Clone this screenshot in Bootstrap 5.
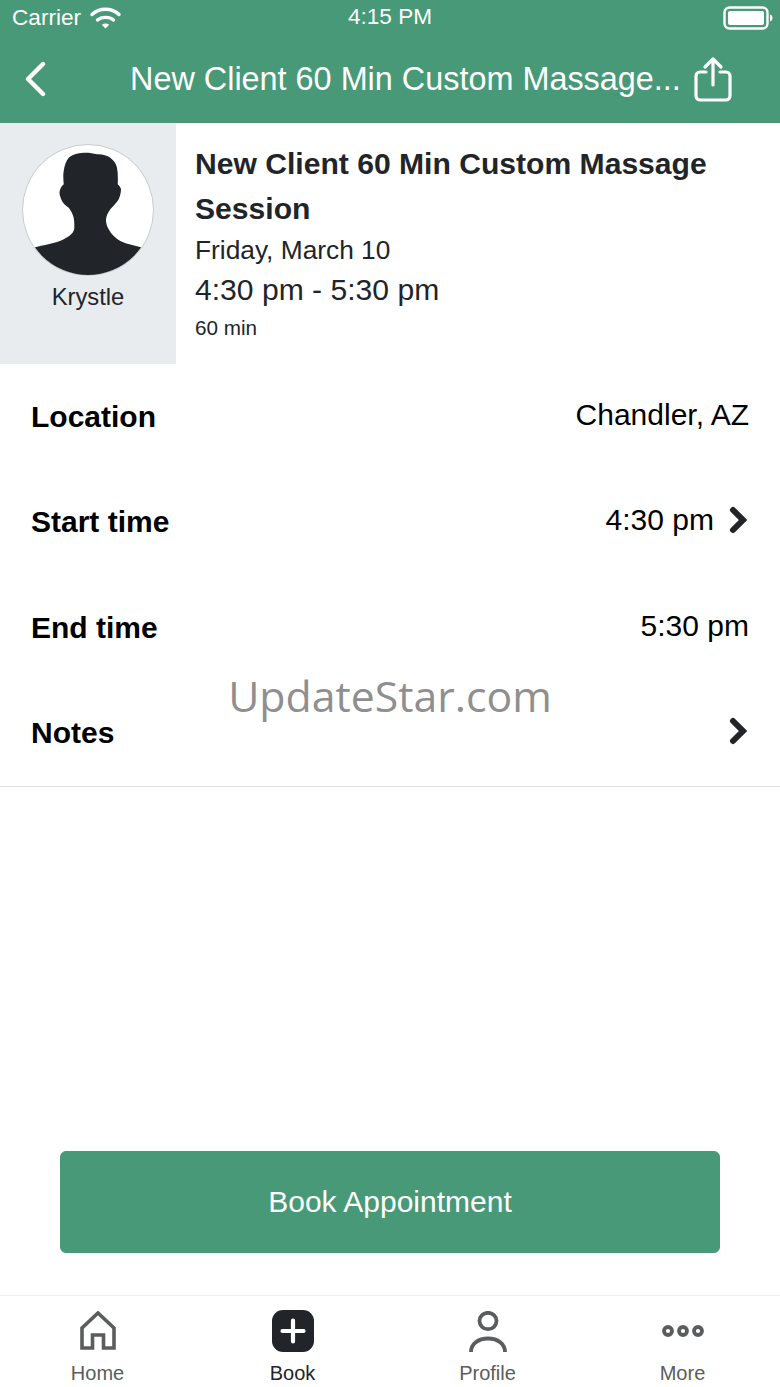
<!DOCTYPE html>
<html lang="en">

<head>
	<meta charset="utf-8">
	<meta name="viewport" content="width=device-width,initial-scale=1">
	<title>Appointment</title>
	<link href="https://cdn.jsdelivr.net/npm/bootstrap@5.3.5/dist/css/bootstrap.min.css" rel="stylesheet">
	<style>
		html, body {height: 100%;}
		body {font-family: "Liberation Sans", Arial, sans-serif; color: #000; background: #fff; position: relative; overflow: hidden;}
		.app-screen {height: 1387px;}
		.app-head {background: #479978; color: #fff; height: 123px;}
		.status-row {height: 36px; margin-bottom: 4px; padding: 0 7px 0 12px; font-size: 22.6px; position: relative;}
		.status-time {position: absolute; left: 0; right: 0; top: 3px; text-align: center; line-height: 28px;}
		.head-row {height: 83px; padding: 0 47px 5px 24px;}
		.head-title {font-size: 32.4px; width: 556px; margin-left: 84px; margin-right: 7px; white-space: nowrap; line-height: 40px;}
		.stylist-col {width: 176px; height: 241px; background: #e9ecef; padding-top: 21px;}
		.avatar-ring {width: 132px; height: 132px; border-radius: 50%; background: #fff; border: 1px solid #c9cccd; overflow: hidden;}
		.stylist-name {font-size: 23.8px; color: #212529; margin-top: 7px; line-height: 28px;}
		.appt-info {padding: 18px 0 0 19px; color: #212529;}
		.appt-title {font-size: 30.1px; font-weight: 700; line-height: 45px; margin: 0;}
		.appt-date {font-size: 26.3px; line-height: 39px;}
		.appt-time {font-size: 30.1px; line-height: 40px;}
		.appt-len {font-size: 20.7px; line-height: 36px;}
		.info-row {height: 105.5px; padding: 0 31px;}
		.info-label {font-size: 30px; font-weight: 700; margin-top: -1px;}
		.info-value {font-size: 30px; margin-top: -5px;}
		.info-list {border-bottom: 1px solid #dee0e2;}
		.chevron {margin-left: 15px;}
		.book-btn {background: #479978; border-color: #479978; color: #fff; font-size: 30px; width: 660px; height: 102px; margin-bottom: 42px; padding-bottom: 8px; border-radius: 6px;}
		.book-btn:hover {background: #479978; border-color: #479978; color: #fff;}
		.tab-bar {height: 92px; border-top: 1px solid #eff0f1;}
		.tab-item {width: 195px; color: #5a5c5e; font-size: 20px; line-height: 24px;}
		.tab-item.is-on {color: #212529;}
		.tab-icon {height: 48px; margin-top: 11px; margin-bottom: 6px;}
		.tab-icon svg {display: block;}
		.water-mark {position: absolute; top: 666px; left: 0; right: 0; text-align: center; font-family: "Open Sans", sans-serif; font-size: 42.8px; line-height: 60px; color: #8f8f8f;}
	</style>
</head>

<body>
	<div class="app-screen d-flex flex-column">
		<header class="app-head">
			<div class="status-row d-flex align-items-center justify-content-between">
				<div class="d-flex align-items-center gap-2">
					<span>Carrier</span>
					<svg class="wifi-icon" width="33" height="24" viewBox="0 0 33 24" fill="none" stroke="#fff" stroke-width="3.4" stroke-linecap="round">
						<path d="M3 8.500C10 1.500 23 1.500 30 8.500" />
						<path d="M8.500 14C12.500 10.500 20.500 10.500 24.500 14" />
						<path d="M16.500 22.500L12.800 18.800C15 17.200 18 17.200 20.200 18.800Z" fill="#fff" stroke="none" />
					</svg>
				</div>
				<div class="status-time">4:15 PM</div>
				<svg width="50" height="24" viewBox="0 0 50 24">
					<rect x="1.500" y="1.500" width="43" height="21" rx="5" fill="none" stroke="#fff" stroke-width="2.400" />
					<rect x="5" y="5" width="36" height="14" rx="2" fill="#fff" />
					<path d="M47 8.500c1.600.4 2.500 1.800 2.500 3.500s-.9 3.100-2.500 3.500z" fill="#fff" />
				</svg>
			</div>
			<div class="head-row d-flex align-items-center">
				<svg width="22" height="36" viewBox="0 0 22 36" fill="none" stroke="#fff" stroke-width="4.400" stroke-linecap="round" stroke-linejoin="round">
					<path d="M19 3L4 18L19 33" />
				</svg>
				<div class="head-title">New Client 60 Min Custom Massage...</div>
				<svg width="40" height="46" viewBox="0 0 40 46" fill="none" stroke="#fff" stroke-width="3.200" stroke-linecap="round" stroke-linejoin="round">
					<path d="M13 16H7a4 4 0 0 0-4 4v20a4 4 0 0 0 4 4h26a4 4 0 0 0 4-4V20a4 4 0 0 0-4-4h-6" />
					<path d="M20 29V3M12 11l8-8 8 8" />
				</svg>
			</div>
		</header>

		<section class="d-flex">
			<div class="stylist-col d-flex flex-column align-items-center flex-shrink-0">
				<div class="avatar-ring">
					<svg width="130" height="130" viewBox="0 0 130 130">
						<path fill="#212529" d="M0 130V106L10.700 102.700C20 100 33 98.500 40.700 94.300C47 91 51.300 87.500 51.300 82.700C51.500 78 51 75 50.700 72.700C49.500 68.500 48 65.500 45.700 62.700C43 60.500 40.500 59 39 56C37.300 52 36 49 36.700 46C37.300 43 39 41 40.700 39.300C40.300 34 40 30 40.700 26C41.500 20 43 16 45.700 12.700C49 9.500 54 8 60.700 7.700C65 7.500 70 8 74 9.300C79 9 84 10.500 87.300 12.700C91 15.500 93 18.500 94 22.700C95 28 95 34 94.700 39.300C96.500 41 97.800 42.500 98 44.300C98 48 97 51.500 95.700 54.300C93.500 58.500 90 61 87.300 64.300C85 67.500 83.500 70.500 83 74.300C82.800 78 84 81.500 85.700 84.300C88.500 89.500 92.500 93.500 97.300 96C104 99.500 112 100.500 120 102.700L130 106V130Z" />
					</svg>
				</div>
				<div class="stylist-name">Krystle</div>
			</div>
			<div class="appt-info">
				<h1 class="appt-title">New Client 60 Min Custom Massage Session</h1>
				<div class="appt-date">Friday, March 10</div>
				<div class="appt-time">4:30 pm - 5:30 pm</div>
				<div class="appt-len">60 min</div>
			</div>
		</section>

		<section class="info-list">
			<div class="info-row d-flex align-items-center justify-content-between">
				<span class="info-label">Location</span>
				<span class="info-value">Chandler, AZ</span>
			</div>
			<div class="info-row d-flex align-items-center justify-content-between">
				<span class="info-label">Start time</span>
				<span class="info-value d-flex align-items-center">4:30 pm
					<svg class="chevron" width="20" height="28" viewBox="0 0 20 28" fill="none" stroke="#212529" stroke-width="6" stroke-linecap="round" stroke-linejoin="miter">
						<path d="M4 4L14 14L4 24" />
					</svg>
				</span>
			</div>
			<div class="info-row d-flex align-items-center justify-content-between">
				<span class="info-label">End time</span>
				<span class="info-value">5:30 pm</span>
			</div>
			<div class="info-row d-flex align-items-center justify-content-between">
				<span class="info-label">Notes</span>
				<span class="info-value d-flex align-items-center">
					<svg class="chevron" width="20" height="28" viewBox="0 0 20 28" fill="none" stroke="#212529" stroke-width="6" stroke-linecap="round" stroke-linejoin="miter">
						<path d="M4 4L14 14L4 24" />
					</svg>
				</span>
			</div>
		</section>

		<div class="flex-grow-1 d-flex align-items-end justify-content-center">
			<button class="btn book-btn">Book Appointment</button>
		</div>

		<nav class="tab-bar d-flex">
			<div class="tab-item d-flex flex-column align-items-center">
				<div class="tab-icon d-flex align-items-center">
					<svg width="36" height="40" viewBox="0 0 36 40" fill="none" stroke="#5a5c5e" stroke-width="3.600" stroke-linejoin="miter">
						<path d="M2 37V17L18 2L34 17V37H23.500V24H12.500V37Z" />
					</svg>
				</div>
				<span>Home</span>
			</div>
			<div class="tab-item is-on d-flex flex-column align-items-center">
				<div class="tab-icon d-flex align-items-center">
					<svg width="42" height="42" viewBox="0 0 42 42">
						<rect width="42" height="42" rx="11" fill="#212529" />
						<path d="M21 10.500V31.500M10.500 21H31.500" stroke="#fff" stroke-width="4.200" stroke-linecap="round" />
					</svg>
				</div>
				<span>Book</span>
			</div>
			<div class="tab-item d-flex flex-column align-items-center">
				<div class="tab-icon d-flex align-items-center">
					<svg width="38" height="41" viewBox="0 0 38 41" fill="none" stroke="#5a5c5e" stroke-width="3.800">
						<ellipse cx="19" cy="10" rx="8.500" ry="8.200" />
						<path d="M2 41C2 33 9 27.500 19 27.500S36 33 36 41" />
					</svg>
				</div>
				<span>Profile</span>
			</div>
			<div class="tab-item d-flex flex-column align-items-center">
				<div class="tab-icon d-flex align-items-center">
					<svg width="42" height="12" viewBox="0 0 42 12" fill="none" stroke="#5a5c5e" stroke-width="3.800">
						<circle cx="6" cy="6" r="4" />
						<circle cx="21" cy="6" r="4" />
						<circle cx="36" cy="6" r="4" />
					</svg>
				</div>
				<span>More</span>
			</div>
		</nav>
	</div>

	<div class="water-mark">UpdateStar.com</div>

	<script src="https://cdn.jsdelivr.net/npm/bootstrap@5.3.5/dist/js/bootstrap.bundle.min.js"></script>
</body>

</html>
